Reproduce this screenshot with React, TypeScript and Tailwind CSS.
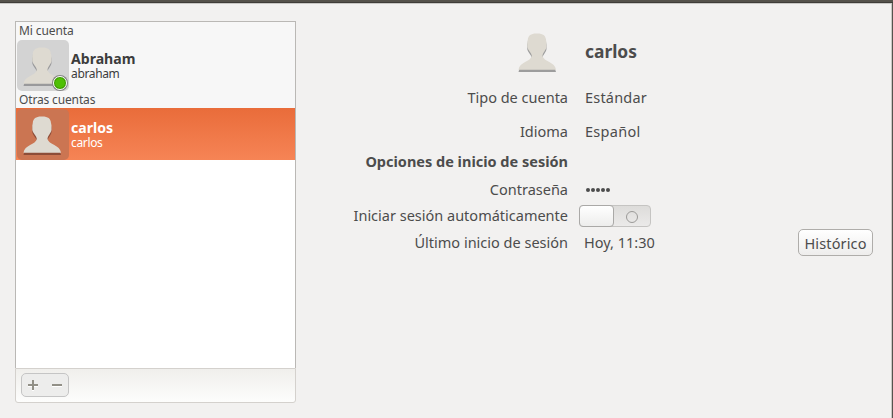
import type { ReactNode } from 'react';

function Silhouette({ base }: { base: string }) {
  const d =
    'M18.8 0.4 C24.5 0.2 27.8 2.3 28 7 L28.5 9.5 L28.5 14 C27.8 17.5 24.5 20 24.5 23 C25.5 28.5 37.3 29 38 36.7 L0.5 36.7 C1.2 29 13 28.5 13.8 23 C13.8 20 10 17.5 9.3 14 L9.3 9.5 L9.8 7 C10 2.3 13.3 0.2 18.8 0.4 Z';
  return (
    <svg width="39" height="41" viewBox="0 0 39 41" className="block">
      <path d={d} transform="translate(0 2.2)" fill={base} />
      <path d={d} fill="#dedad1" />
    </svg>
  );
}

function UserRow({
  name,
  login,
  avatar,
  className,
}: {
  name: string;
  login: string;
  avatar: ReactNode;
  className: string;
}) {
  return (
    <div className={`flex h-[52px] items-center pl-px ${className}`}>
      {avatar}
      <div className="ml-[2px] flex flex-col pt-[2px]">
        <span className="text-[14.1px] font-bold leading-[15px]">{name}</span>
        <span className="text-[12px] leading-[15px] tracking-[-0.35px]">{login}</span>
      </div>
    </div>
  );
}

function Label({ children, className = 'pb-[2px]' }: { children: ReactNode; className?: string }) {
  return <div className={`whitespace-nowrap text-right ${className}`}>{children}</div>;
}

export default function App() {
  return (
    <div className="flex h-[418px] w-[893px] flex-col overflow-hidden bg-[#f2f1f0] font-['Noto_Sans','Open_Sans',sans-serif] text-[14.5px] leading-[20px] text-[#4c4c4c]">
      <div className="h-[3px] shrink-0 border-b border-[#3f3d39] bg-[#55524b]" />
      <div className="flex h-[415px] border-r border-[#55534e] shadow-[inset_-1px_1px_0_#c9c8c5]">
        <aside className="ml-[15px] mt-[18px] flex h-[382px] w-[281px] flex-col">
          <div className="h-[347px] border border-b-0 border-[#bab8b5] bg-white text-[12px]">
            <div className="bg-[#f7f7f7]">
              <div className="flex h-[17px] items-center pl-[3px] text-[#4c4c4c]">
                <span className="tracking-[-0.1px]">Mi cuenta</span>
              </div>
              <UserRow
                className="text-[#3c3c3c]"
                avatar={
                  <div className="relative flex h-[51px] w-[52px] rounded-[5px] bg-[#d3d3d3] pl-[6px] pt-[7px]">
                    <Silhouette base="#99999b" />
                    <span className="absolute bottom-px right-[2px] h-[14px] w-[14px] rounded-full border-[1.5px] border-white bg-[#4fc005] shadow-[0_0_0_1px_#858585,inset_0_0_0_1px_#3a9100]" />
                  </div>
                }
                name="Abraham"
                login="abraham"
              />
              <div className="flex h-[17px] items-center pl-[3px]">
                <span className="tracking-[-0.15px]">Otras cuentas</span>
              </div>
            </div>
            <UserRow
              className="bg-linear-to-b from-[#e96c3a] to-[#f68455] text-white"
              avatar={
                <div className="flex h-[51px] w-[52px] rounded-[5px] bg-[#cb7552] pl-[6px] pt-[7px]">
                  <Silhouette base="#8d4d38" />
                </div>
              }
              name="carlos"
              login="carlos"
            />
          </div>
          <div className="flex h-[35px] items-start rounded-b-[3px] border border-[#d4d1cd] bg-linear-to-b from-[#f0efec] to-[#fdfdfc] pl-[5px] pt-[4px]">
            <div className="flex h-[24px] w-[48px] items-center gap-[12px] rounded-[5px] border border-[#c5c5c5] bg-[#ededec] pl-[5px]">
              <svg width="12" height="12" viewBox="0 0 12 12">
                <path d="M1 7h10M6 2v10" stroke="#fff" strokeWidth="2" />
                <path d="M1 6h10M6 1v10" stroke="#929087" strokeWidth="2" />
              </svg>
              <svg width="12" height="12" viewBox="0 0 12 12">
                <path d="M1 7h10" stroke="#fff" strokeWidth="2" />
                <path d="M1 6h10" stroke="#929087" strokeWidth="2" />
              </svg>
            </div>
          </div>
        </aside>

        <main className="ml-[34px] mt-[24px] grid h-[230px] w-[543px] grid-cols-[238px_1fr_auto] grid-rows-[54px_34px_34px_26px_28px_26px_28px] items-center">
          <div className="flex justify-end self-start pr-[11px] pt-[6px]">
            <Silhouette base="#9d9d9d" />
          </div>
          <div className="col-span-2 pb-[7px] pl-[17px] text-[17.4px] font-bold">carlos</div>

          <Label>Tipo de cuenta</Label>
          <div className="col-span-2 pb-[2px] pl-[17px] tracking-[0.2px]">Estándar</div>

          <Label>Idioma</Label>
          <div className="col-span-2 pb-[2px] pl-[17px] tracking-[0.3px]">Español</div>

          <Label className="pb-[2px] font-bold">Opciones de inicio de sesión</Label>
          <div className="col-span-2" />

          <Label className="pb-0">Contraseña</Label>
          <div className="col-span-2 flex gap-px pl-[18px] pt-px">
            {[0, 1, 2, 3, 4].map((i) => (
              <span key={i} className="h-[4px] w-[4px] rounded-full bg-[#4c4c4c]" />
            ))}
          </div>

          <Label>Iniciar sesión automáticamente</Label>
          <div className="col-span-2 pl-[11px]">
            <div className="flex h-[22px] w-[72px] rounded-[4px] border border-[#c5c4c2] bg-linear-to-b from-[#dddcda] to-[#ebeae9]">
              <div className="-my-px -ml-px h-[22px] w-[35px] rounded-[4px] border border-[#aaa9a7] bg-linear-to-b from-white to-[#ededec]" />
              <div className="flex flex-1 items-center justify-center pt-[2px]">
                <span className="h-[12px] w-[12px] rounded-full border border-[#9b9a98]" />
              </div>
            </div>
          </div>

          <Label>Último inicio de sesión</Label>
          <div className="pb-[2px] pl-[16px]">Hoy, 11:30</div>
          <button className="flex h-[27px] w-[75px] items-center justify-center self-start rounded-[5px] border border-[#afadaa] bg-linear-to-b from-white to-[#eeedec] tracking-[0.15px]">
            Histórico
          </button>
        </main>
      </div>
    </div>
  );
}
